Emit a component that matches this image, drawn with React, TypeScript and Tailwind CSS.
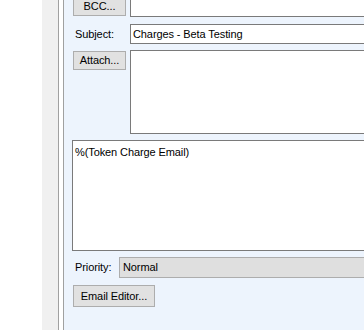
const font = { fontFamily: '"Liberation Sans", Arial, sans-serif' };

function Btn({ label, w, h, mt = 0 }: { label: string; w: number; h: number; mt?: number }) {
  return (
    <div
      className="flex items-center justify-center border border-[#adadad] bg-[#e1e1e1] text-black shrink-0"
      style={{ width: w, height: h, marginTop: mt }}
    >
      {label}
    </div>
  );
}

export default function App() {
  return (
    <div
      className="w-[364px] h-[330px] flex overflow-hidden bg-white text-[11px] tracking-[-0.1px] text-black"
      style={font}
    >
      {/* outer window chrome */}
      <div className="w-[42px] shrink-0 bg-white" />
      <div className="w-[17px] shrink-0 bg-[#f0f0f0] border-r border-[#a0a0a0]" />
      <div className="w-[5px] shrink-0 bg-white border-r border-[#a0a0a0]" />

      {/* email panel */}
      <div className="flex-1 bg-[#edf4fd] flex flex-col">
        {/* BCC */}
        <div className="flex items-start mt-[-4px]">
          <div className="w-[66px] shrink-0 pl-[9px]">
            <Btn label="BCC..." w={53} h={20} />
          </div>
          <div className="mt-[1px] h-[20px] w-[300px] shrink-0 bg-white border border-[#7a7a7a]" />
        </div>

        {/* Subject */}
        <div className="flex items-center mt-[7px]">
          <div className="w-[66px] shrink-0 pl-[11px]">Subject:</div>
          <div className="h-[20px] w-[300px] shrink-0 bg-white border border-[#7a7a7a] flex items-center pl-[2px]">
            Charges - Beta Testing
          </div>
        </div>

        {/* Attach */}
        <div className="flex items-start mt-[6px]">
          <div className="w-[66px] shrink-0 pl-[9px]">
            <Btn label="Attach..." w={53} h={19} mt={1} />
          </div>
          <div className="h-[84px] w-[300px] shrink-0 bg-white border border-[#7a7a7a]" />
        </div>

        {/* Body */}
        <div className="mt-[6px] ml-[8px] h-[111px] w-[320px] shrink-0 bg-white border border-[#7a7a7a] px-[2px] pt-[3px]">
          %(Token Charge Email)
        </div>

        {/* Priority */}
        <div className="flex items-center mt-[6px]">
          <div className="w-[55px] shrink-0 pl-[11px]">Priority:</div>
          <div className="h-[21px] w-[300px] shrink-0 bg-[#dfdfdf] border border-[#adadad] flex items-center pl-[3px]">
            Normal
          </div>
        </div>

        {/* Email editor */}
        <div className="mt-[7px] pl-[9px]">
          <Btn label="Email Editor..." w={82} h={22} />
        </div>
      </div>
    </div>
  );
}
